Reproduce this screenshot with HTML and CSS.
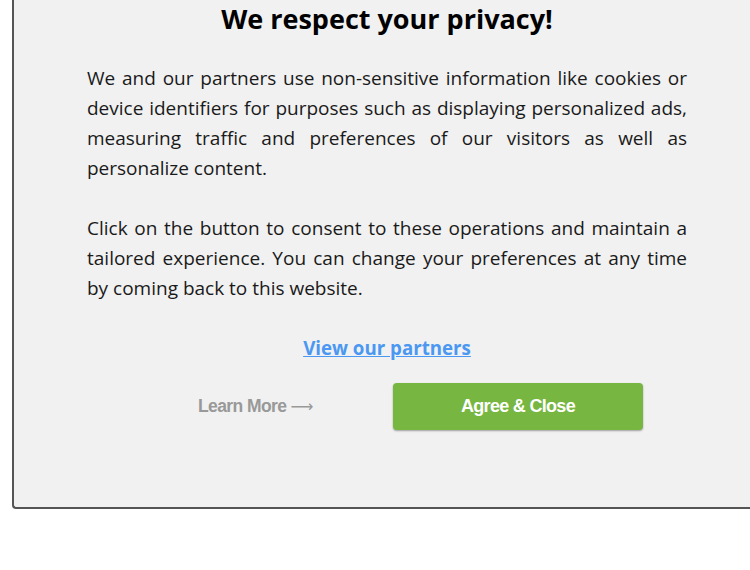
FILE: index.html
```html
<!DOCTYPE html>
<html>
<head>
<meta charset="utf-8">
<link rel="stylesheet" href="styles.css">
</head>
<body>
<div class="page">
  <div class="modal">
    <h1 class="title">We respect your privacy!</h1>
    <p class="text">We and our partners use non-sensitive information like cookies or device identifiers for purposes such as displaying personalized ads, measuring traffic and preferences of our visitors as well as personalize content.</p>
    <p class="text">Click on the button to consent to these operations and maintain a tailored experience. You can change your preferences at any time by coming back to this website.</p>
    <div class="partners"><a class="partners-link" href="#">View our partners</a></div>
    <div class="actions">
      <a class="learn" href="#">Learn More <span class="arrow">&#10230;</span></a>
      <button class="agree">Agree &amp; Close</button>
    </div>
  </div>
</div>
</body>
</html>
```
FILE: styles.css
```css
html, body {
  margin: 0;
  padding: 0;
  background: #ffffff;
  overflow: hidden;
}
.page {
  padding-left: 12px;
}
.modal {
  width: 600px;
  padding: 0 63px 77px 73px;
  background: #f1f1f1;
  border: 2px solid #555555;
  border-top: none;
  border-right: none;
  border-radius: 0 0 0 4px;
  font-family: "Open Sans", "Noto Sans", sans-serif;
  color: #1a1a1a;
}
.title {
  margin: 0;
  font-size: 27px;
  line-height: 38px;
  font-weight: 700;
  text-align: center;
  color: #000;
}
.text {
  margin: 25px 0 0 0;
  font-size: 19px;
  line-height: 30px;
  text-align: justify;
}
.text + .text {
  margin-top: 30px;
}
.partners {
  margin-top: 30px;
  line-height: 30px;
  text-align: center;
}
.partners-link {
  font-family: "Open Sans", sans-serif;
  font-size: 18.7px;
  font-weight: 700;
  color: #4a98f2;
  text-decoration: underline;
}
.actions {
  margin-top: 19px;
  display: flex;
  align-items: center;
  padding-left: 111px;
  gap: 77px;
}
.learn {
  width: 118px;
  font-family: "Liberation Sans", Arial, sans-serif;
  font-size: 17.5px;
  font-weight: 700;
  letter-spacing: -0.6px;
  color: #999999;
  text-decoration: none;
  white-space: nowrap;
}
.arrow {
  font-family: "DejaVu Sans", sans-serif;
  font-weight: 400;
  font-size: 16px;
  letter-spacing: 0;
}
.agree {
  width: 250px;
  height: 47px;
  border: none;
  border-radius: 4px;
  background: #76b641;
  color: #ffffff;
  font-family: "Liberation Sans", Arial, sans-serif;
  font-size: 18px;
  font-weight: 700;
  letter-spacing: -0.7px;
  box-shadow: 0 1px 2px rgba(0,0,0,0.35);
  cursor: pointer;
}
```
